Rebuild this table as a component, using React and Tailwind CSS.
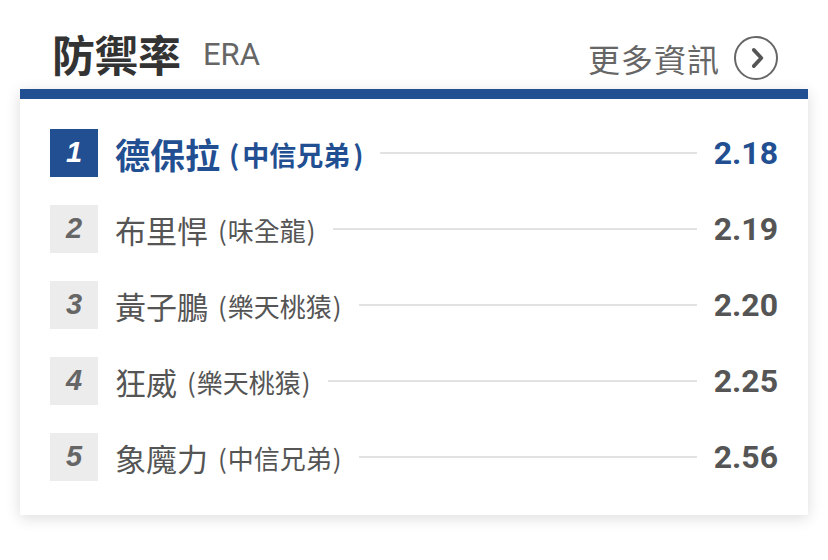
import React from 'react';

const CJK = { fontFamily: '"Noto Sans CJK TC", "Noto Sans", sans-serif' };
const NUM = { fontFamily: 'Roboto, "Liberation Sans", sans-serif' };
const RANK = { fontFamily: '"Liberation Sans", Arial, sans-serif' };

const leaders = [
  { rank: 1, name: '德保拉', team: '中信兄弟', era: '2.18' },
  { rank: 2, name: '布里悍', team: '味全龍', era: '2.19' },
  { rank: 3, name: '黃子鵬', team: '樂天桃猿', era: '2.20' },
  { rank: 4, name: '狂威', team: '樂天桃猿', era: '2.25' },
  { rank: 5, name: '象魔力', team: '中信兄弟', era: '2.56' },
];

// one leaderboard row: rank box, name + team, rule, value
const Row = ({ rank, name, team, era }) => {
  const top = rank === 1;
  return (
    <div className="flex h-[76px] items-center">
      <div
        className={`flex h-[48px] w-[48px] shrink-0 items-center justify-center text-[29px] font-bold italic ${
          top ? 'bg-[#224f91] text-white' : 'bg-[#ececec] text-[#666]'
        }`}
        style={RANK}
      >
        {rank}
      </div>
      <div
        className={`ml-[17px] flex items-center whitespace-nowrap ${top ? 'text-[#224f91] font-bold' : 'text-[#555]'}`}
        style={CJK}
      >
        <span className={top ? 'text-[35px] leading-none' : 'text-[31px] leading-none'}>{name}</span>
        {top ? (
          <span className="ml-[9px] mt-[2px] text-[27px] leading-none">
            <span className="mr-[3px]">(</span>
            {team}
            <span className="ml-[3px]">)</span>
          </span>
        ) : (
          <span className="ml-[10px] mt-[2px] text-[26px] leading-none">
            <span className="mr-[1px]">(</span>
            {team}
            <span className="ml-[1px]">)</span>
          </span>
        )}
      </div>
      <div className="mx-[17px] h-[2px] flex-1 bg-[#e2e2e2]" />
      <div
        className={`text-[32px] font-bold leading-none ${top ? 'text-[#224f91]' : 'text-[#555]'}`}
        style={NUM}
      >
        {era}
      </div>
    </div>
  );
};

export default function App() {
  return (
    <div className="h-[560px] w-[828px] bg-white">
      {/* Header */}
      <div className="flex h-[89px] items-center justify-between pl-[52px] pr-[50px] pt-[18px]">
        <div className="flex items-center">
          <span className="text-[43px] font-bold leading-none text-[#333]" style={CJK}>
            防禦率
          </span>
          <span className="ml-[22px] mt-[2px] text-[31px] leading-none text-[#666]" style={NUM}>
            ERA
          </span>
        </div>
        <div className="mt-[8px] flex items-center">
          <span className="text-[32px] leading-none tracking-[1px] text-[#666]" style={CJK}>
            更多資訊
          </span>
          <span className="ml-[14px] flex h-[44px] w-[44px] items-center justify-center rounded-full border-2 border-[#666]">
            <svg width="26" height="26" viewBox="0 0 24 24" fill="none" className="ml-[2px]">
              <path d="M9 4.5l7 7.5-7 7.5" stroke="#555" strokeWidth="3.4" strokeLinecap="round" strokeLinejoin="round" />
            </svg>
          </span>
        </div>
      </div>

      {/* Card */}
      <div className="mx-[20px] bg-white shadow-[0_3px_14px_rgba(0,0,0,0.14)]">
        <div className="h-[10px] bg-[#224f91]" />
        <div className="px-[30px] pb-[20px] pt-[16px]">
          {leaders.map((p) => (
            <Row key={p.rank} {...p} />
          ))}
        </div>
      </div>
    </div>
  );
}
